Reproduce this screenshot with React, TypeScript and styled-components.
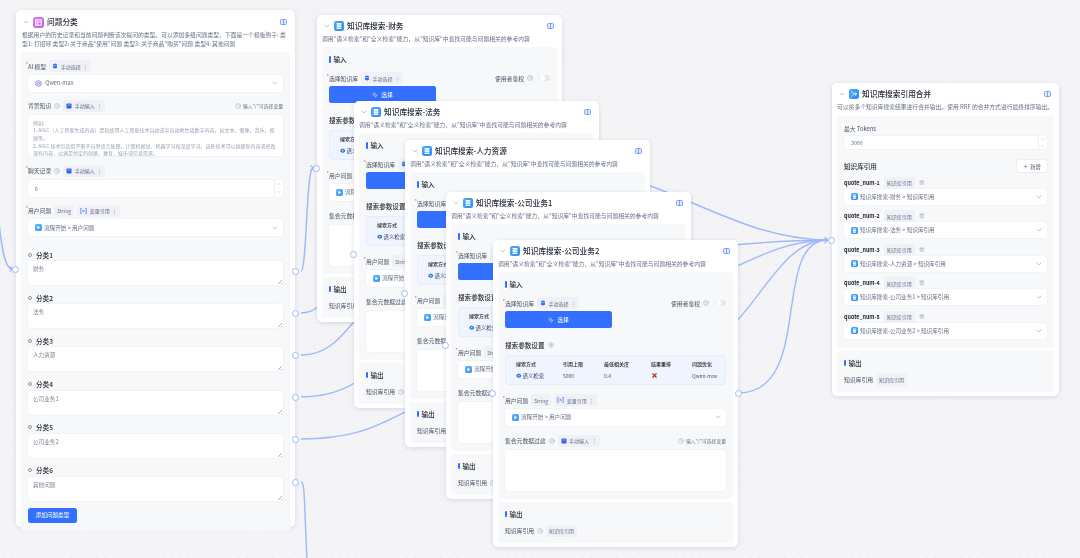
import styled, { createGlobalStyle } from "styled-components";
import {
  ChevronDown,
  ChevronUp,
  CircleHelp,
  Clock,
  MousePointerClick,
  Plus,
  Settings,
  Trash2,
  X,
} from "lucide-react";

const GlobalStyle = createGlobalStyle`
  html, body {
    margin: 0;
    padding: 0;
    background: #f4f4f7;
    overflow: hidden;
  }
  * {
    box-sizing: border-box;
  }
`;

const Canvas = styled.div`
  position: relative;
  width: 1080px;
  height: 558px;
  overflow: hidden;
  background-color: #f4f4f7;
  background-image: radial-gradient(#dcdde3 0.5px, transparent 0.8px);
  background-size: 8.4px 8.4px;
  font-family: "Noto Sans CJK SC", "Noto Sans", sans-serif;
  color: #485264;
  filter: blur(0.4px);
`;

const Edges = styled.svg`
  position: absolute;
  inset: 0;
  width: 1080px;
  height: 558px;
  fill: none;
  stroke: #9db8fb;
  stroke-width: 1.4;
`;

const Node = styled.div<{ $x: number; $y: number; $w: number; $h: number }>`
  position: absolute;
  left: ${(p) => p.$x}px;
  top: ${(p) => p.$y}px;
  width: ${(p) => p.$w}px;
  height: ${(p) => p.$h}px;
  padding: 5px;
  background: #fff;
  border-radius: 5px;
  box-shadow: 0 1px 4px rgba(19, 51, 107, 0.14);
  display: flex;
  flex-direction: column;
`;

const Handle = styled.span<{ $side: "left" | "right"; $top: number }>`
  position: absolute;
  top: ${(p) => p.$top}px;
  ${(p) => p.$side}: -4px;
  width: 7px;
  height: 7px;
  margin-top: -3.5px;
  border-radius: 50%;
  background: #fff;
  border: 1.2px solid #9db8fb;
`;

const Header = styled.div<{ $top?: number }>`
  display: flex;
  align-items: center;
  height: 12px;
  padding: 0 3px 0 1px;
  margin-top: ${(p) => p.$top ?? 0}px;
  gap: 3px;
`;

const Title = styled.div`
  flex: 1;
  font-size: 7.7px;
  line-height: 12px;
  font-weight: 500;
  color: #1f2733;
  white-space: nowrap;
`;

const Desc = styled.div`
  font-size: 5.8px;
  line-height: 9px;
  color: #667085;
  margin-top: 2px;
  white-space: nowrap;
`;

const WrapDesc = styled(Desc)`
  white-space: normal;
  padding-left: 1px;
`;

const Panel = styled.div<{ $grow?: boolean; $top?: number }>`
  background: #f7f8fa;
  border-radius: 4px;
  padding: 8px 7px;
  margin-top: ${(p) => p.$top ?? 4}px;
  ${(p) => (p.$grow ? "flex: 1;" : "")}
`;

const SectionTitle = styled.div`
  display: flex;
  align-items: center;
  font-size: 6.6px;
  line-height: 9px;
  color: #24282c;
  font-weight: 500;
  &::before {
    content: "";
    width: 1.5px;
    height: 6.5px;
    margin-right: 3px;
    border-radius: 1px;
    background: #3370ff;
  }
`;

const Row = styled.div<{ $top?: number }>`
  display: flex;
  align-items: center;
  height: 12px;
  gap: 3px;
  margin-top: ${(p) => p.$top ?? 0}px;
  color: #485264;
  white-space: nowrap;
`;

const Label = styled.span<{ $required?: boolean; $strong?: boolean }>`
  position: relative;
  font-size: ${(p) => (p.$strong ? 6.6 : 5.8)}px;
  color: ${(p) => (p.$strong ? "#24282c" : "#485264")};
  font-weight: ${(p) => (p.$strong ? 500 : 400)};
  ${(p) =>
    p.$required
      ? `&::before {
    content: "*";
    position: absolute;
    left: -2.5px;
    top: -2px;
    color: #f04438;
    font-size: 5.5px;
  }`
      : ""}
`;

const QuoteLabel = styled.span`
  font-size: 5.4px;
  font-weight: 600;
  color: #24282c;
`;

const Tag = styled.span`
  display: inline-flex;
  align-items: center;
  height: 12px;
  padding: 0 3px;
  gap: 2.5px;
  border-radius: 2px;
  background: #f0f1f6;
  font-size: 5px;
  color: #667085;
  white-space: nowrap;
`;

const Spacer = styled.span`
  flex: 1;
`;

const Hint = styled.span`
  display: inline-flex;
  align-items: center;
  gap: 1.5px;
  font-size: 4.8px;
  color: #667085;
`;

const Select = styled.div<{ $top?: number; $h?: number }>`
  display: flex;
  align-items: center;
  gap: 2px;
  height: ${(p) => p.$h ?? 17}px;
  margin-top: ${(p) => p.$top ?? 2.5}px;
  padding: 0 4px 0 7px;
  background: #fff;
  border-radius: 3px;
  box-shadow: 0 0 1.5px rgba(19, 51, 107, 0.12);
  font-size: 5.6px;
  color: #667085;
  white-space: nowrap;
`;

const SelectText = styled.span`
  flex: 1;
`;

const NumberBox = styled(Select)`
  padding-right: 0;
  font-size: 5.2px;
`;

const Stepper = styled.span`
  display: flex;
  flex-direction: column;
  align-items: center;
  justify-content: space-around;
  width: 9px;
  height: 100%;
  color: #8a95a7;
  border-left: 0.5px solid #eceef2;
`;

const TextBox = styled.div<{ $h: number; $top?: number; $small?: boolean }>`
  position: relative;
  height: ${(p) => p.$h}px;
  margin-top: ${(p) => p.$top ?? 3}px;
  padding: 4px 5px;
  overflow: hidden;
  background: #fff;
  border-radius: 3px;
  box-shadow: 0 0 1.5px rgba(19, 51, 107, 0.12);
  font-size: ${(p) => (p.$small ? 5 : 5.6)}px;
  line-height: ${(p) => (p.$small ? 7.7 : 8)}px;
  color: ${(p) => (p.$small ? "#98a2b3" : "#7a8494")};
`;

const Resize = styled.span`
  position: absolute;
  right: 1px;
  bottom: 1px;
  width: 4px;
  height: 4px;
  background: linear-gradient(135deg, transparent 50%, #a9afba 50%, #a9afba 62%, transparent 62%, transparent 78%, #a9afba 78%);
`;

const SelectButton = styled.div`
  display: flex;
  align-items: center;
  justify-content: center;
  gap: 3px;
  width: 107px;
  height: 17px;
  margin-top: 2px;
  border-radius: 2.5px;
  background: #3370ff;
  color: #fff;
  font-size: 5.8px;
`;

const ParamTable = styled.div`
  display: grid;
  grid-template-columns: 47px 41px 47px 41px 1fr;
  align-items: center;
  row-gap: 3.5px;
  height: 30px;
  margin-top: 4px;
  padding: 0 10px;
  align-content: center;
  background: #f0f4ff;
  border-radius: 4px;
  border: 0.5px solid #e6ecfb;
  font-size: 5px;
  line-height: 8px;
  color: #485264;
  white-space: nowrap;
`;

const ParamHead = styled.span`
  color: #24282c;
  font-weight: 500;
`;

const ParamMode = styled.span`
  display: inline-flex;
  align-items: center;
  gap: 1px;
  font-size: 5.4px;
  color: #3a4a68;
`;

const Toggle = styled.span`
  width: 11px;
  height: 6.5px;
  margin-left: 3px;
  border-radius: 4px;
  background: #e6e8ee;
  position: relative;
  &::after {
    content: "";
    position: absolute;
    left: 0.5px;
    top: 0.5px;
    width: 5.5px;
    height: 5.5px;
    border-radius: 50%;
    background: #fff;
  }
`;

const OutputPanel = styled(Panel)`
  height: 41px;
  flex: none;
`;

const AddButton = styled.div`
  display: flex;
  align-items: center;
  justify-content: center;
  width: 49px;
  height: 15px;
  margin-top: 7px;
  border-radius: 2.5px;
  background: #3370ff;
  color: #fff;
  font-size: 5.6px;
`;

const NewButton = styled.span`
  display: inline-flex;
  align-items: center;
  justify-content: center;
  gap: 2px;
  width: 30px;
  height: 12px;
  border-radius: 2px;
  background: #fff;
  box-shadow: 0 0 1.5px rgba(19, 51, 107, 0.25);
  font-size: 5.2px;
  color: #485264;
`;

const Grey = styled.span`
  display: inline-flex;
  color: #8a95a7;
`;

const Danger = styled.span`
  display: inline-flex;
  color: #b5301f;
`;

const IconBox = styled.span`
  display: inline-flex;
  flex: none;
`;

// --- drawn icons ---

const NodeIcon = ({ size = 10, from = "#4aa9ff", to = "#2b8cf5", kind = "kb" }: { size?: number; from?: string; to?: string; kind?: "kb" | "classify" | "merge" | "flow" }) => {
  const id = `g-${kind}-${from.slice(1)}`;
  return (
    <IconBox>
      <svg width={size} height={size} viewBox="0 0 20 20">
        <defs>
          <linearGradient id={id} x1="0" y1="0" x2="1" y2="1">
            <stop offset="0" stopColor={from} />
            <stop offset="1" stopColor={to} />
          </linearGradient>
        </defs>
        <rect width="20" height="20" rx="4.5" fill={`url(#${id})`} />
        {kind === "kb" && (
          <g fill="#fff">
            <rect x="5" y="4" width="10" height="3.4" rx="1.2" />
            <rect x="5" y="8.4" width="10" height="3.4" rx="1.2" />
            <rect x="5" y="12.8" width="10" height="3.4" rx="1.2" />
          </g>
        )}
        {kind === "classify" && (
          <path d="M5 5h10v10H5zM5 9h10M8.5 9v6" fill="none" stroke="#fff" strokeWidth="1.8" strokeLinejoin="round" />
        )}
        {kind === "merge" && (
          <path d="M5 5.5c3 0 3 4.5 6 4.5h4M5 14.5c3 0 3-4.5 6-4.5M12.5 7.5 15 10l-2.5 2.5" fill="none" stroke="#fff" strokeWidth="1.6" strokeLinecap="round" />
        )}
        {kind === "flow" && <path d="M7 5l8 5-8 5z" fill="#fff" />}
      </svg>
    </IconBox>
  );
};

const BookIcon = () => (
  <IconBox>
    <svg width="7" height="6" viewBox="0 0 14 12">
      <rect x="1" y="1" width="12" height="10" rx="2" fill="#dfe8ff" stroke="#5a8cf7" strokeWidth="1.5" />
      <path d="M7 1v10" stroke="#5a8cf7" strokeWidth="1.5" />
    </svg>
  </IconBox>
);

const ManualSelectIcon = () => (
  <IconBox>
    <svg width="6" height="6" viewBox="0 0 12 12">
      <path d="M2 2.5 6 1l4 1.5v7L6 11 2 9.5z" fill="#3370ff" />
      <path d="M2 5.2h8" stroke="#fff" strokeWidth="0.8" />
    </svg>
  </IconBox>
);

const ManualInputIcon = () => (
  <IconBox>
    <svg width="6" height="6" viewBox="0 0 12 12">
      <rect x="1" y="1" width="10" height="10" rx="1.5" fill="#2f62e8" />
      <path d="M3 4h6" stroke="#fff" strokeWidth="1" />
    </svg>
  </IconBox>
);

const VariableIcon = () => (
  <IconBox>
    <svg width="7" height="6" viewBox="0 0 14 12" fill="none" stroke="#3370ff" strokeWidth="1.4">
      <path d="M3.5 1H1.5v10h2M10.5 1h2v10h-2M5 4l4 4M9 4 5 8" />
    </svg>
  </IconBox>
);

const QwenIcon = () => (
  <IconBox>
    <svg width="7" height="7" viewBox="0 0 14 14" fill="none" stroke="#7a55e6" strokeWidth="1.4">
      <path d="M7 1l5.2 3v6L7 13l-5.2-3V4z" />
      <path d="M4.8 5.2h4.4v3.6H4.8z" strokeWidth="1.1" />
    </svg>
  </IconBox>
);

const SemanticIcon = () => (
  <IconBox>
    <svg width="5.5" height="5.5" viewBox="0 0 12 12">
      <path d="M6 1l5 3v4l-5 3-5-3V4z" fill="#2b7fd8" />
      <circle cx="6" cy="6" r="1.6" fill="#fff" />
    </svg>
  </IconBox>
);

const Chevron = () => (
  <Grey>
    <ChevronDown size={8} strokeWidth={1.6} />
  </Grey>
);

const Dots = () => <Grey>⋮</Grey>;

const Help = () => (
  <Grey>
    <CircleHelp size={6} strokeWidth={1.6} />
  </Grey>
);

const Clocked = () => (
  <Grey>
    <Clock size={6} strokeWidth={1.6} />
  </Grey>
);

const UserQuestionRow = ({ top }: { top?: number }) => (
  <Row $top={top}>
    <Label $required>用户问题</Label>
    <Tag>String</Tag>
    <Tag>
      <VariableIcon />
      变量引用
      <Dots />
    </Tag>
  </Row>
);

const FlowSelect = () => (
  <Select>
    <NodeIcon size={7} kind="flow" from="#5ab4ff" to="#3a9af7" />
    <SelectText>流程开始 &gt; 用户问题</SelectText>
    <Chevron />
  </Select>
);

const InputHint = () => (
  <Hint>
    <Clocked />
    输入"/"可选择变量
  </Hint>
);

// --- nodes ---

function KbNode({ x, y, title }: { x: number; y: number; title: string }) {
  return (
    <Node $x={x} $y={y} $w={245} $h={307}>
      <Handle $side="left" $top={153} />
      <Handle $side="right" $top={153} />
      <Header>
        <Chevron />
        <NodeIcon />
        <Title>{title}</Title>
        <BookIcon />
      </Header>
      <Desc>调用"语义检索"和"全义检索"能力，从"知识库"中查找可能与问题相关的参考内容</Desc>
      <Panel>
        <SectionTitle>输入</SectionTitle>
        <Row $top={8}>
          <Label $required>选择知识库</Label>
          <Tag>
            <ManualSelectIcon />
            手动选择
            <Dots />
          </Tag>
          <Spacer />
          <Label>使用者鉴权</Label>
          <Help />
          <Toggle />
        </Row>
        <SelectButton>
          <MousePointerClick size={6} strokeWidth={1.8} />
          选择
        </SelectButton>
        <Row $top={11}>
          <Label $strong>搜索参数设置</Label>
          <Grey>
            <Settings size={6} strokeWidth={1.6} />
          </Grey>
        </Row>
        <ParamTable>
          <ParamHead>搜索方式</ParamHead>
          <ParamHead>引用上限</ParamHead>
          <ParamHead>最低相关度</ParamHead>
          <ParamHead>结果重排</ParamHead>
          <ParamHead>问题优化</ParamHead>
          <ParamMode>
            <SemanticIcon />
            语义检索
          </ParamMode>
          <span>5000</span>
          <span>0.4</span>
          <Danger>
            <X size={7} strokeWidth={4} />
          </Danger>
          <span>Qwen-max</span>
        </ParamTable>
        <UserQuestionRow top={9} />
        <FlowSelect />
        <Row $top={9}>
          <Label>集合元数据过滤</Label>
          <Help />
          <Tag>
            <ManualInputIcon />
            手动输入
            <Dots />
          </Tag>
          <Spacer />
          <InputHint />
        </Row>
        <TextBox $h={41} />
      </Panel>
      <OutputPanel $top={3}>
        <SectionTitle>输出</SectionTitle>
        <Row $top={6}>
          <Label>知识库引用</Label>
          <Clocked />
          <Tag>知识库引用</Tag>
        </Row>
      </OutputPanel>
    </Node>
  );
}

const categories = ["财务", "法务", "人力资源", "公司业务1", "公司业务2", "其他问题"];

const Category = styled.div`
  margin-top: 8.2px;
  &:first-child {
    margin-top: 0;
  }
`;

const CategoryHead = styled(Row)`
  height: 9px;
  gap: 4px;
`;

const Categories = styled.div`
  margin-top: 14px;
`;

const DotIcon = styled.span`
  width: 4px;
  height: 4px;
  border-radius: 50%;
  border: 0.7px solid #8a95a7;
`;

function ClassifyNode() {
  return (
    <Node $x={16} $y={10} $w={279} $h={517}>
      <Handle $side="left" $top={259} />
      {categories.map((c, i) => (
        <Handle key={c} $side="right" $top={261 + i * 42.2} />
      ))}
      <Header $top={1}>
        <Chevron />
        <NodeIcon size={11} kind="classify" from="#e07bf0" to="#b760f0" />
        <Title>问题分类</Title>
        <BookIcon />
      </Header>
      <WrapDesc>
        根据用户的历史记录和当前问题判断该次提问的类型。可以添加多组问题类型，下面是一个模板例子: 类型1: 打招呼 类型2: 关于商品"使用"问题 类型3: 关于商品"购买"问题 类型4: 其他问题
      </WrapDesc>
      <Panel $grow>
        <Row>
          <Label $required>AI 模型</Label>
          <Tag>
            <ManualSelectIcon />
            手动选择
            <Dots />
          </Tag>
        </Row>
        <Select>
          <QwenIcon />
          <SelectText>&nbsp;Qwen-max</SelectText>
          <Chevron />
        </Select>
        <Row $top={8}>
          <Label>背景知识</Label>
          <Help />
          <Tag>
            <ManualInputIcon />
            手动输入
            <Dots />
          </Tag>
          <Spacer />
          <InputHint />
        </Row>
        <TextBox $h={41} $small>
          例如:
          <br />
          1. AIGC（人工智能生成内容）是指使用人工智能技术自动或半自动地生成数字内容，如文本、图像、音乐、视频等。
          <br />
          2. AIGC 技术包括但不限于自然语言处理、计算机视觉、机器学习和深度学习。这些技术可以创建新内容或修改现有内容，以满足特定的创意、教育、娱乐或信息需求。
        </TextBox>
        <Row $top={9}>
          <Label $required>聊天记录</Label>
          <Help />
          <Tag>
            <ManualInputIcon />
            手动输入
            <Dots />
          </Tag>
        </Row>
        <NumberBox $top={3}>
          <SelectText>6</SelectText>
          <Stepper>
            <ChevronUp size={4} />
            <ChevronDown size={4} />
          </Stepper>
        </NumberBox>
        <UserQuestionRow top={8} />
        <FlowSelect />
        <Categories>
          {categories.map((c, i) => (
            <Category key={c}>
              <CategoryHead>
                <DotIcon />
                <Label $strong>{`分类${i + 1}`}</Label>
              </CategoryHead>
              <TextBox $h={24} $top={2}>
                {c}
                <Resize />
              </TextBox>
            </Category>
          ))}
        </Categories>
        <AddButton>添加问题类型</AddButton>
      </Panel>
    </Node>
  );
}

const quotes = ["财务", "法务", "人力资源", "公司业务1", "公司业务2"];

const TokensRow = styled(Row)`
  height: 8px;
`;

const QuoteRow = styled(Row)`
  height: 11px;
  margin-top: 5px;
  gap: 4px;
`;

const MergeSelect = styled(Select)`
  height: 16px;
  margin-top: 0.5px;
`;

const MergeQuote = styled.div`
  padding-bottom: 1px;
`;

function MergeNode() {
  return (
    <Node $x={832} $y={83} $w={227} $h={313}>
      <Handle $side="left" $top={157} />
      <Header>
        <Chevron />
        <NodeIcon kind="merge" />
        <Title>知识库搜索引用合并</Title>
        <BookIcon />
      </Header>
      <Desc>可以将多个知识库搜索结果进行合并输出。使用 RRF 的合并方式进行最终排序输出。</Desc>
      <Panel $grow $top={5}>
        <TokensRow>
          <Label>最大 Tokens</Label>
        </TokensRow>
        <NumberBox $top={4} $h={13}>
          <SelectText>3000</SelectText>
          <Stepper>
            <ChevronUp size={4} />
            <ChevronDown size={4} />
          </Stepper>
        </NumberBox>
        <Row $top={11}>
          <Label $strong>知识库引用</Label>
          <Spacer />
          <NewButton>
            <Plus size={5} />
            新增
          </NewButton>
        </Row>
        {quotes.map((q, i) => (
          <MergeQuote key={q}>
            <QuoteRow>
              <QuoteLabel>{`quote_num-${i + 1}`}</QuoteLabel>
              <Tag>知识库引用</Tag>
              <Grey>
                <Trash2 size={5.5} strokeWidth={1.6} />
              </Grey>
            </QuoteRow>
            <MergeSelect>
              <NodeIcon size={7} />
              <SelectText>{`知识库搜索-${q} > 知识库引用`}</SelectText>
              <Chevron />
            </MergeSelect>
          </MergeQuote>
        ))}
      </Panel>
      <OutputPanel $top={3}>
        <SectionTitle>输出</SectionTitle>
        <Row $top={6}>
          <Label>知识库引用</Label>
          <Tag>知识库引用</Tag>
        </Row>
      </OutputPanel>
    </Node>
  );
}

const edges = [
  "M-3 200C0 240 4 269 12 269",
  "M301 271C307 271 306 168 313 168",
  "M301 313C340 313 315 255 350 255",
  "M301 355C350 355 355 293 400 293",
  "M301 397C370 397 375 346 442 346",
  "M301 439C400 439 395 393 489 393",
  "M301 482C305 482 304 500 307 560",
  "M562 168C660 168 730 240 828 240",
  "M599 254C680 254 740 240 828 240",
  "M649 293C710 293 760 240 828 240",
  "M691 345C750 345 770 240 828 240",
  "M738 393C815 393 770 240 828 240",
];

const arrows = ["M9.5 266.5 12.5 269 9.5 271.5", "M310.5 165.5 313.5 168 310.5 170.5", "M824.5 237 828 240 824.5 243"];

export default function App() {
  return (
    <Canvas>
      <GlobalStyle />
      <Edges viewBox="0 0 1080 558">
        {edges.map((d) => (
          <path key={d} d={d} />
        ))}
        {arrows.map((d) => (
          <path key={d} d={d} />
        ))}
      </Edges>
      <ClassifyNode />
      <KbNode x={317} y={15} title="知识库搜索-财务" />
      <KbNode x={354} y={101} title="知识库搜索-法务" />
      <KbNode x={405} y={140} title="知识库搜索-人力资源" />
      <KbNode x={446} y={192} title="知识库搜索-公司业务1" />
      <KbNode x={493} y={240} title="知识库搜索-公司业务2" />
      <MergeNode />
    </Canvas>
  );
}
